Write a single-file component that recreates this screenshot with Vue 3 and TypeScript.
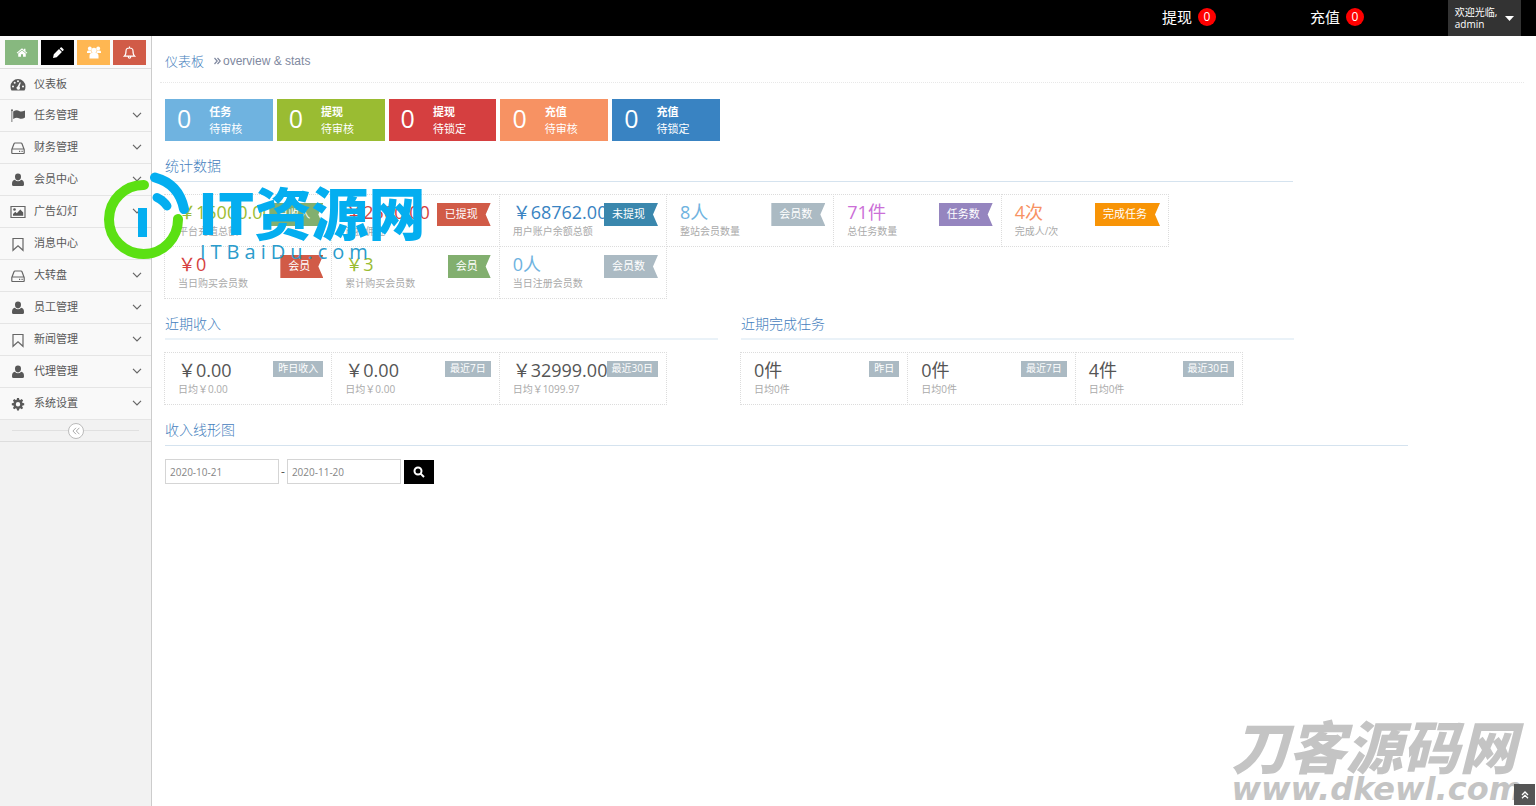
<script setup lang="ts">
interface NavItem { label: string; icon: string; arrow: boolean }
interface Stat { value: string; label: string; tag: string; color: string; tagColor: string }
interface Tile { title: string; note: string; color: string }
interface Period { value: string; label: string; tag: string }

const nav: NavItem[] = [
  { label: '仪表板', icon: 'gauge', arrow: false },
  { label: '任务管理', icon: 'flag', arrow: true },
  { label: '财务管理', icon: 'drive', arrow: true },
  { label: '会员中心', icon: 'user', arrow: true },
  { label: '广告幻灯', icon: 'image', arrow: true },
  { label: '消息中心', icon: 'bookmark', arrow: false },
  { label: '大转盘', icon: 'drive', arrow: true },
  { label: '员工管理', icon: 'user', arrow: true },
  { label: '新闻管理', icon: 'bookmark', arrow: true },
  { label: '代理管理', icon: 'user', arrow: true },
  { label: '系统设置', icon: 'cog', arrow: true },
]
const tiles: Tile[] = [
  { title: '任务', note: '待审核', color: 'sky' },
  { title: '提现', note: '待审核', color: 'lime' },
  { title: '提现', note: '待锁定', color: 'red' },
  { title: '充值', note: '待审核', color: 'orange' },
  { title: '充值', note: '待锁定', color: 'blue' },
]
const stats: Stat[] = [
  { value: '￥15000.00', label: '平台充值总额', tag: '总收入', color: 'c-lime', tagColor: 't-green' },
  { value: '￥2500.00', label: '已提佣金', tag: '已提现', color: 'c-red', tagColor: 't-red' },
  { value: '￥68762.00', label: '用户账户余额总额', tag: '未提现', color: 'c-blue', tagColor: 't-blue' },
  { value: '8人', label: '整站会员数量', tag: '会员数', color: 'c-sky', tagColor: 't-grey' },
  { value: '71件', label: '总任务数量', tag: '任务数', color: 'c-pink', tagColor: 't-purple' },
  { value: '4次', label: '完成人/次', tag: '完成任务', color: 'c-orange', tagColor: 't-orange' },
  { value: '￥0', label: '当日购买会员数', tag: '会员', color: 'c-red', tagColor: 't-red' },
  { value: '￥3', label: '累计购买会员数', tag: '会员', color: 'c-lime', tagColor: 't-green' },
  { value: '0人', label: '当日注册会员数', tag: '会员数', color: 'c-sky', tagColor: 't-grey' },
]
const recent: { title: string; items: Period[] }[] = [
  {
    title: '近期收入',
    items: [
      { value: '￥0.00', label: '日均￥0.00', tag: '昨日收入' },
      { value: '￥0.00', label: '日均￥0.00', tag: '最近7日' },
      { value: '￥32999.00', label: '日均￥1099.97', tag: '最近30日' },
    ],
  },
  {
    title: '近期完成任务',
    items: [
      { value: '0件', label: '日均0件', tag: '昨日' },
      { value: '0件', label: '日均0件', tag: '最近7日' },
      { value: '4件', label: '日均0件', tag: '最近30日' },
    ],
  },
]
</script>

<template>
  <div class="page">
    <header class="topbar">
      <a class="notice" href="#">提现 <span class="count">0</span></a>
      <a class="notice" href="#">充值 <span class="count">0</span></a>
      <button class="account" type="button">
        <span>欢迎光临,<br>admin</span>
        <svg width="9" height="5" viewBox="0 0 9 5"><path d="M0 0h9L4.500 5z" fill="#fff" /></svg>
      </button>
    </header>

    <div class="body">
      <aside class="sidebar">
        <div class="shortcuts">
          <button class="s-green" type="button" aria-label="首页">
            <svg width="12" height="11" viewBox="0 0 14 12" fill="#fff"><path d="M7 1 0.800 6.300l.8.900L7 2.700l5.400 4.500.8-.9L11 4.400V1.500H9.300V3z" /><path d="M2.600 7.300 7 3.600l4.400 3.700V11H8.200V8H5.800v3H2.600z" /></svg>
          </button>
          <button class="s-black" type="button" aria-label="编辑">
            <svg width="12" height="12" viewBox="0 0 12 12" fill="#fff"><path d="M1 11l.8-3.700 5.200-5.200 2.900 2.900L4.700 10.200zM7.700 1.400 8.700.5q.6-.5 1.100 0l1.700 1.700q.5.500 0 1.100l-.9 1z" /></svg>
          </button>
          <button class="s-amber" type="button" aria-label="会员">
            <svg width="14" height="13" viewBox="0 0 14 13" fill="#fff"><circle cx="7" cy="4.400" r="2.700" /><circle cx="2.800" cy="2.500" r="1.900" /><circle cx="11.200" cy="2.500" r="1.900" /><path d="M0 7V5.800Q.5 4.300 1.500 4.500h2.300q0 1.500 1.200 2.500H0zM14 7V5.800Q13.500 4.300 12.500 4.500h-2.300q0 1.500-1.200 2.500H14zM2.500 12.500V10q0-3 2.200-3h4.600q2.200 0 2.200 3v2.500z" /></svg>
          </button>
          <button class="s-red" type="button" aria-label="通知">
            <svg width="13" height="13" viewBox="0 0 13 13" fill="none" stroke="#fff" stroke-width="1.200"><path d="M1.300 10.200Q3 9 3 5q0-3 3.500-3T10 5q0 4 1.700 5.200zM6.500 2V.5M5.200 10.500q.2 1.700 1.300 1.700t1.300-1.700" /></svg>
          </button>
        </div>
        <nav>
          <a v-for="item in nav" :key="item.label" class="nav-item" href="#">
            <svg class="nav-icon" width="16" height="16" viewBox="0 0 16 16">
              <path v-if="item.icon === 'gauge'" fill="#585858" fill-rule="evenodd" d="M8 2a7.500 7.500 0 0 0-7.500 7.500q0 2.300 1 4h13q1-1.700 1-4A7.500 7.500 0 0 0 8 2zM2 9.500a1 1 0 1 1 2 0a1 1 0 0 1-2 0zM3.700 5.700a1 1 0 1 1 2 0a1 1 0 0 1-2 0zM7 4.200a1 1 0 1 1 2 0a1 1 0 0 1-2 0zM12 9.500a1 1 0 1 1 2 0a1 1 0 0 1-2 0zM9.800 5.200l1 .3-1.300 4.200q1 1 .3 2.200-1.200 1.500-2.900.4-1.300-1.800.8-3z" />
              <path v-else-if="item.icon === 'flag'" fill="#585858" d="M1 2.300a1 1 0 1 1 1.300.8V14h-.8V3.200zM3.200 3.600q3.300-2.400 6-.6 2 1.200 5.800-.4v7q-3.300 2-6 .6-2.500-1.300-5.800.7z" />
              <g v-else-if="item.icon === 'drive'" fill="none" stroke="#666" stroke-width="1.200"><path d="M1.800 9.500 4 3.700q.3-.7 1-.7h6q.7 0 1 .7l2.200 5.800V13q0 .5-.5.500H2.300q-.5 0-.5-.5zM2 9h12" /><path d="M9 11.300h1.200M11.500 11.300h1.200" /></g>
              <path v-else-if="item.icon === 'user'" fill="#585858" d="M8 1.500q3 0 3 3.300T8 8.500Q5 8.200 5 4.800T8 1.500zM4.800 7.800Q8 10.800 11.200 7.800 14 8.300 14 12v.5q0 1.500-1.500 1.500h-9Q2 14 2 12.500V12q0-3.700 2.800-4.200z" />
              <g v-else-if="item.icon === 'image'"><path d="M1 2.500h14v11H1z" fill="none" stroke="#666" stroke-width="1.200" /><path d="M3 11.700V10l2.300-2.300 1.500 1.500 3.500-3.700 2.900 3v3.200z" fill="#585858" /><circle cx="4.500" cy="5.500" r="1.300" fill="#585858" /></g>
              <path v-else-if="item.icon === 'bookmark'" d="M3 2.500h10v11.800L8 9.900l-5 4.400z" fill="none" stroke="#666" stroke-width="1.200" />
              <path v-else fill="#585858" fill-rule="evenodd" d="m7 2-.3 1.700-1 .4-1.400-1L2.900 4.500l1 1.400-.4 1L1.800 7.200v2l1.700.3.4 1-1 1.400 1.400 1.400 1.400-1 1 .4L7 14.400h2l.3-1.700 1-.4 1.400 1 1.400-1.400-1-1.400.4-1 1.700-.3v-2l-1.700-.3-.4-1 1-1.400-1.400-1.400-1.400 1-1-.4L9 2zM8 6a2.200 2.200 0 1 1 0 4.400A2.200 2.200 0 0 1 8 6z" />
            </svg>
            <span>{{ item.label }}</span>
            <svg v-if="item.arrow" class="arrow" width="10" height="6" viewBox="0 0 10 6"><path d="m1 .8 4 4 4-4" fill="none" stroke="#666" stroke-width="1.200" /></svg>
          </a>
        </nav>
        <div class="collapse">
          <button type="button" aria-label="收起">
            <svg width="8" height="8" viewBox="0 0 8 8"><path d="M4 .8.900 4 4 7.200M7.400.8 4.300 4l3.100 3.200" fill="none" stroke="#aaa" /></svg>
          </button>
        </div>
      </aside>

      <main>
        <div class="heading">
          <h1>仪表板</h1>
          <svg width="7" height="8" viewBox="0 0 7 8"><path d="m.5 1 2.700 3L.5 7M3.500 1l2.700 3-2.700 3" fill="none" stroke="#8089a0" stroke-width="1.200" /></svg>
          <small>overview &amp; stats</small>
        </div>

        <div class="tiles">
          <div v-for="(tile, i) in tiles" :key="i" class="tile" :class="tile.color">
            <span class="tile-num">0</span>
            <span class="tile-text"><b>{{ tile.title }}</b><span>{{ tile.note }}</span></span>
          </div>
        </div>

        <section class="wide">
          <h2>统计数据</h2>
          <div class="boxes six">
            <div v-for="(s, i) in stats" :key="i" class="box">
              <div class="value" :class="s.color">{{ s.value }}</div>
              <div class="label">{{ s.label }}</div>
              <span class="ribbon" :class="s.tagColor">{{ s.tag }}</span>
            </div>
          </div>
        </section>

        <div class="columns">
          <section v-for="group in recent" :key="group.title" class="thick">
            <h2>{{ group.title }}</h2>
            <div class="boxes">
              <div v-for="(p, i) in group.items" :key="i" class="box">
                <div class="value">{{ p.value }}</div>
                <div class="label">{{ p.label }}</div>
                <span class="badge">{{ p.tag }}</span>
              </div>
            </div>
          </section>
        </div>

        <section class="chart">
          <h2>收入线形图</h2>
          <form class="range" @submit.prevent>
            <input type="text" value="2020-10-21" aria-label="开始日期">
            <span>-</span>
            <input type="text" value="2020-11-20" aria-label="结束日期">
            <button type="submit" aria-label="查询">
              <svg width="12" height="12" viewBox="0 0 12 12" fill="none" stroke="#fff" stroke-width="2"><circle cx="5" cy="5" r="3.500" /><path d="m7.600 7.600 3.400 3.400" /></svg>
            </button>
          </form>
        </section>
      </main>
    </div>

    <div class="brand">
      <svg width="86" height="88" viewBox="0 0 86 88" fill="none" stroke-linecap="round">
        <path d="M40 13A34.500 34.500 0 1 0 74 47" stroke="#5be013" stroke-width="10" />
        <path d="M51 5.500Q75 12 80 37" stroke="#04aef0" stroke-width="10" />
        <path d="M53 25.500Q60 29 63 34" stroke="#04aef0" stroke-width="9" />
        <path d="M38.500 36v29" stroke="#04aef0" stroke-width="9" stroke-linecap="butt" />
      </svg>
      <div class="brand-text"><strong>IT资源网</strong><span>ITBaiDu.com</span></div>
    </div>

    <div class="stamp"><strong>刀客源码网</strong><span>www.dkewl.com</span></div>
    <button class="to-top" type="button" aria-label="返回顶部">
      <svg width="8" height="8" viewBox="0 0 8 8"><path d="m1 4 3-3 3 3M1 7.300l3-3 3 3" fill="none" stroke="#fff" stroke-width="1.300" /></svg>
    </button>
  </div>
</template>

<style>
body { margin: 0; background: #fff; }
</style>

<style scoped>
* { box-sizing: border-box; }
.page { position: relative; min-height: 100vh; display: flex; flex-direction: column; overflow: hidden; font: 12px/16px "Open Sans", "Noto Sans CJK SC", sans-serif; color: #555; }
button { border: 0; padding: 0; font: inherit; display: flex; align-items: center; justify-content: center; cursor: pointer; }
a { text-decoration: none; color: inherit; }
.topbar { height: 36px; background: #000; display: flex; justify-content: flex-end; padding-right: 15px; color: #fff; }
.notice { width: 148px; height: 34px; display: flex; align-items: center; gap: 6px; font-size: 15px; color: #fff; }
.notice + .notice { width: 138px; }
.count { width: 18px; height: 18px; border-radius: 9px; background: #f00; text-align: center; font-size: 12px; line-height: 18px; }
.account { width: 73px; height: 36px; background: #333; color: #fff; font-size: 10px; line-height: 12px; text-align: left; gap: 8px; white-space: nowrap; }
.body { flex: 1; display: flex; }
.sidebar { width: 152px; flex: none; background: #f2f2f2; border-right: 1px solid #ccc; }
.shortcuts { display: flex; gap: 3px; height: 33px; padding: 4px 5px 3px; background: #fafafa; border-bottom: 1px solid #ddd; }
.shortcuts button { flex: 1; }
.s-green { background: #87b87f; }
.s-black { background: #000; }
.s-amber { background: #ffb752; }
.s-red { background: #d15b47; }
.nav-item { height: 32px; display: flex; align-items: center; padding: 0 9px 1px 10px; background: #f9f9f9; border-bottom: 1px solid #e5e5e5; color: #585858; font-size: 11px; }
.nav-item:first-child { height: 31px; }
.nav-icon { margin: 2px 8px 0 0; }
.arrow { margin-left: auto; }
.collapse { height: 22px; border-bottom: 1px solid #ddd; display: flex; align-items: center; padding: 0 12px; }
.collapse::before, .collapse::after { content: ""; flex: 1; height: 1px; background: #e0e0e0; }
.collapse button { width: 16px; height: 16px; border: 1px solid #bbb; border-radius: 8px; background: #fff; }
main { flex: 1; min-width: 0; padding: 0 12px 0 13px; }
.heading { height: 47px; margin-left: -5px; padding: 3px 0 0 5px; display: flex; align-items: center; border-bottom: 1px dotted #e8e8e8; }
h1 { margin: 0 10px 0 0; font-size: 13px; line-height: 18px; font-weight: 300; color: #4580bd; }
small { margin-left: 2px; font: 12px "Liberation Sans", Arial, sans-serif; color: #8089a0; }
.tiles { display: grid; grid-template-columns: repeat(5, 1fr); gap: 4px; width: 555px; margin: 16px 0 14px; color: #fff; }
.tile { height: 42px; display: flex; padding: 0 12px; gap: 18px; }
.tile-num { font-size: 25px; line-height: 38px; }
.tile-text { display: flex; flex-direction: column; padding-top: 4px; font-size: 11px; line-height: 17px; }
.sky { background: #6fb3e0; }
.lime { background: #9abc32; }
.red { background: #d53f40; }
.orange { background: #f79263; }
.blue { background: #3983c2; }
h2 { margin: 0 0 12px; height: 27px; font-size: 14px; line-height: 21px; font-weight: 300; color: #4580bd; border-bottom: 1px solid #d5e3ef; }
.wide { width: 83%; }
.boxes { display: grid; grid-template-columns: repeat(3, 1fr); width: 502px; margin-left: -1px; }
.six { grid-template-columns: repeat(6, 1fr); width: 1004px; }
.box { position: relative; height: 53px; margin: 0 -1px -1px 0; border: 1px dotted #dcdcdc; padding: 5px 13px; white-space: nowrap; }
.value { font-size: 18px; line-height: 24px; }
.label { font-size: 10px; line-height: 14px; color: #aaa; }
.ribbon { position: absolute; right: 8px; top: 8px; height: 23px; padding: 0 13px 0 8px; color: #fff; font-size: 11px; line-height: 21px; clip-path: polygon(0 0, 100% 0, calc(100% - 5px) 50%, 100% 100%, 0 100%); }
.badge { position: absolute; right: 8px; top: 8px; height: 16px; padding: 0 5px; background: #abbac3; color: #fff; font-size: 10px; line-height: 15px; }
.c-lime { color: #9abc32; }
.c-red { color: #d53f40; }
.c-blue { color: #3983c2; }
.c-sky { color: #6fb3e0; }
.c-pink { color: #cb6fd7; }
.c-orange { color: #f79263; }
.t-green { background: #82af6f; }
.t-red { background: #d15b47; }
.t-blue { background: #3a87ad; }
.t-grey { background: #abbac3; }
.t-purple { background: #9585bf; }
.t-orange { background: #f89406; }
.columns { display: grid; grid-template-columns: 553px 553px; gap: 23px; margin-top: 15px; }
.thick h2 { border-bottom: 2px solid #eaf2f8; }
.chart { width: 91%; min-width: 1243px; margin-top: 15px; }
.range { display: flex; align-items: center; gap: 3px; padding-top: 1px; }
.range span { margin: 0 -1px; }
.range input { width: 114px; height: 25px; border: 1px solid #d5d5d5; padding: 0 4px; font: 10px "Open Sans", sans-serif; color: #858585; background: #fff; }
.range button { width: 30px; height: 24px; background: #000; }
.brand { position: absolute; left: 104px; top: 172px; display: flex; pointer-events: none; }
.brand-text { display: flex; flex-direction: column; margin: 9px 0 0 8px; color: #04aef0; white-space: nowrap; }
.brand-text strong { font: 900 57px/58px "Noto Sans CJK SC", sans-serif; }
.brand-text span { padding: 2px 0 0 2px; font-size: 20px; line-height: 22px; letter-spacing: 5px; color: #2b9ccc; }
.stamp { position: absolute; right: 14px; bottom: 0; display: flex; flex-direction: column; color: #c4c4c4; white-space: nowrap; pointer-events: none; }
.stamp strong { font: italic 900 57px/56px "Noto Sans CJK SC", sans-serif; }
.stamp span { font: italic 800 32px/34px "DejaVu Sans", sans-serif; }
.to-top { position: absolute; right: 1px; bottom: 1px; width: 21px; height: 21px; background: #555; }
</style>
